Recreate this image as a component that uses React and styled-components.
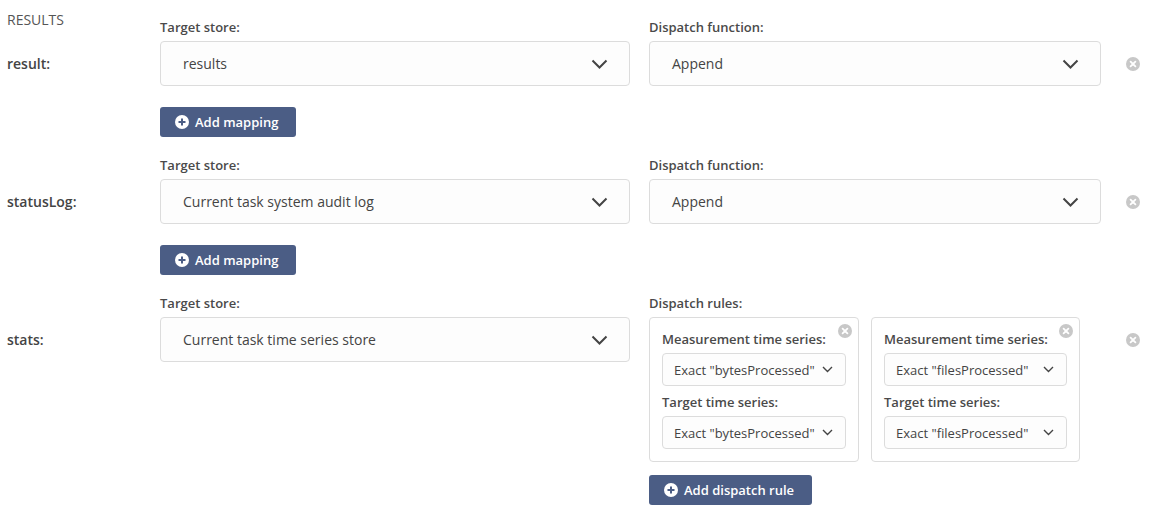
import React from 'react'
import styled, { createGlobalStyle } from 'styled-components'

const GlobalStyle = createGlobalStyle`
  body {
    margin: 0;
    background: #fff;
    font-family: "Open Sans", "Noto Sans", sans-serif;
    color: #333;
  }
`

const Container = styled.div`
  padding: 10px 0 0 7px;
`
const Title = styled.div`
  font-size: 14px;
  line-height: 20px;
  font-weight: 500;
  color: #555;
  margin-bottom: -10px;
`
const Row = styled.div`
  display: flex;
  align-items: flex-start;
  margin-bottom: 21px;
`
const RowLabel = styled.div`
  width: 153px;
  margin-top: 21px;
  height: 45px;
  display: flex;
  align-items: center;
  font-size: 14px;
  font-weight: 600;
  color: #444;
`
const Field = styled.div`
  width: ${p => p.width}px;
  margin-left: ${p => p.offset || 0}px;
  display: flex;
  flex-direction: column;
  align-items: flex-start;
`
const FieldLabel = styled.div`
  font-size: 13px;
  line-height: 14px;
  font-weight: 600;
  color: #4a4a4a;
  margin-bottom: 7px;
`
const Select = styled.div`
  box-sizing: border-box;
  width: 100%;
  height: 45px;
  border: 1px solid #dcdcdc;
  border-radius: 4px;
  background: #fdfdfd;
  display: flex;
  align-items: center;
  justify-content: space-between;
  padding: 0 21px 0 22px;
  font-size: 14px;
  color: #444;
`
const Button = styled.button`
  margin-top: ${p => p.gap || 21}px;
  height: 30px;
  padding: 0 18px 0 15px;
  border: none;
  border-radius: 3px;
  background: #4b5d85;
  color: #fff;
  font-family: inherit;
  font-size: 13px;
  font-weight: 600;
  display: flex;
  align-items: center;
  gap: 6px;
  cursor: pointer;
`
const Remove = styled.div`
  margin-top: 21px;
  height: 45px;
  padding-left: 25px;
  display: flex;
  align-items: center;
`
const Cards = styled.div`
  display: flex;
  gap: 12px;
`
const Card = styled.div`
  position: relative;
  box-sizing: border-box;
  width: ${p => p.width}px;
  border: 1px solid #dcdcdc;
  border-radius: 4px;
  padding: 13px 12px 12px 12px;
`
const CardLabel = styled.div`
  font-size: 13px;
  line-height: 16px;
  font-weight: 600;
  color: #4a4a4a;
  margin: ${p => (p.second ? '8px' : '0')} 0 6px;
`
const SmallSelect = styled.div`
  box-sizing: border-box;
  height: 33px;
  border: 1px solid #dcdcdc;
  border-radius: 4px;
  background: #fdfdfd;
  display: flex;
  align-items: center;
  justify-content: space-between;
  padding: 0 12px 0 11px;
  font-size: 13px;
  color: #444;
`
const CardRemove = styled.div`
  position: absolute;
  top: 6px;
  right: 6px;
  display: flex;
`

const Chevron = ({ small }) =>
  small ? (
    <svg width="11" height="7" viewBox="0 0 11 7">
      <polyline points="1,1 5.5,5.5 10,1" fill="none" stroke="#444" strokeWidth="1.4" />
    </svg>
  ) : (
    <svg width="17" height="10" viewBox="0 0 17 10">
      <polyline points="1.5,1.5 8.5,8.5 15.5,1.5" fill="none" stroke="#444" strokeWidth="2" />
    </svg>
  )

const CloseIcon = () => (
  <svg width="14" height="14" viewBox="0 0 14 14">
    <circle cx="7" cy="7" r="7" fill="#c8c8c8" />
    <path d="M4.6 4.6 L9.4 9.4 M9.4 4.6 L4.6 9.4" stroke="#fff" strokeWidth="1.8" strokeLinecap="round" />
  </svg>
)

const PlusIcon = () => (
  <svg width="14" height="14" viewBox="0 0 14 14">
    <circle cx="7" cy="7" r="7" fill="#fff" />
    <path d="M7 3.5 V10.5 M3.5 7 H10.5" stroke="#4b5d85" strokeWidth="2" />
  </svg>
)

const mappings = [
  { name: 'result:', store: 'results', fn: 'Append' },
  { name: 'statusLog:', store: 'Current task system audit log', fn: 'Append' },
]

const rules = [
  { width: 210, value: 'Exact "bytesProcessed"' },
  { width: 209, value: 'Exact "filesProcessed"' },
]

function App() {
  return (
    <Container>
      <GlobalStyle />
      <Title>RESULTS</Title>
      {mappings.map(m => (
        <Row key={m.name}>
          <RowLabel>{m.name}</RowLabel>
          <Field width={470}>
            <FieldLabel>Target store:</FieldLabel>
            <Select>
              {m.store}
              <Chevron />
            </Select>
            <Button>
              <PlusIcon />
              Add mapping
            </Button>
          </Field>
          <Field width={452} offset={19}>
            <FieldLabel>Dispatch function:</FieldLabel>
            <Select>
              {m.fn}
              <Chevron />
            </Select>
          </Field>
          <Remove>
            <CloseIcon />
          </Remove>
        </Row>
      ))}
      <Row>
        <RowLabel>stats:</RowLabel>
        <Field width={470}>
          <FieldLabel>Target store:</FieldLabel>
          <Select>
            Current task time series store
            <Chevron />
          </Select>
        </Field>
        <Field width={452} offset={19}>
          <FieldLabel>Dispatch rules:</FieldLabel>
          <Cards>
            {rules.map(r => (
              <Card key={r.value} width={r.width}>
                <CardRemove>
                  <CloseIcon />
                </CardRemove>
                <CardLabel>Measurement time series:</CardLabel>
                <SmallSelect>
                  {r.value}
                  <Chevron small />
                </SmallSelect>
                <CardLabel second>Target time series:</CardLabel>
                <SmallSelect>
                  {r.value}
                  <Chevron small />
                </SmallSelect>
              </Card>
            ))}
          </Cards>
          <Button gap={13}>
            <PlusIcon />
            Add dispatch rule
          </Button>
        </Field>
        <Remove>
          <CloseIcon />
        </Remove>
      </Row>
    </Container>
  )
}

export default App
